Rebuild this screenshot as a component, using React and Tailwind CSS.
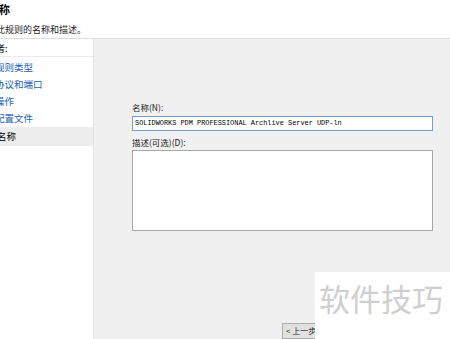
import React from 'react';

const cjk = { fontFamily: '"Noto Sans CJK SC", "Noto Sans", sans-serif' };

const steps = ['规则类型', '协议和端口', '操作', '配置文件'];

const App = () => {
  return (
    <div className="w-[450px] h-[339px] overflow-hidden bg-[#f0f0f0] flex flex-col relative" style={cjk}>
      {/* header */}
      <div className="h-[42px] bg-white border-b border-[#dcdcdc] flex flex-col pt-[2px]">
        <div className="text-[11px] font-bold leading-[14px] text-black ml-[-1px]">称</div>
        <div className="text-[9px] leading-[12px] mt-[8px] text-[#222] ml-[-4px]">此规则的名称和描述。</div>
      </div>

      <div className="flex flex-1">
        {/* left steps */}
        <div className="w-[94px] bg-white border-r border-[#e2e2e2] flex flex-col">
          <div className="h-[16px] border-b border-[#eaeaea] text-[9px] leading-[16px] text-black ml-[-4px] mt-[2px]">者:</div>
          <div className="flex flex-col mt-[2px]">
            {steps.map((s) => (
              <div key={s} className="h-[17px] text-[9.5px] leading-[17px] text-[#1a5fb4] ml-[-5px]">{s}</div>
            ))}
            <div className="h-[19px] bg-[#ededed] text-[9.5px] leading-[19px] text-black ml-[-5px] pl-[2px]">名称</div>
          </div>
        </div>

        {/* form */}
        <div className="flex-1 pl-[38px] pr-[17px] pt-[63px]">
          <div className="text-[8.5px] leading-[10px] text-[#222]">名称(N):</div>
          <div className="mt-[4px] h-[15px] bg-white border border-[#7a9cc6] flex items-center pl-[2px]">
            <span className="text-[6.9px] text-black whitespace-nowrap" style={{ fontFamily: '"Liberation Mono", monospace' }}>
              SOLIDWORKS PDM PROFESSIONAL Archlive Server UDP-ln
            </span>
          </div>
          <div className="mt-[6px] text-[8.5px] leading-[10px] text-[#222]">描述(可选)(D):</div>
          <div className="mt-[3px] h-[81px] bg-white border border-[#a8a8a8]"></div>
          <div className="mt-[92px] ml-[150px] w-[40px] h-[16px] bg-[#e1e1e1] border border-[#adadad] text-[8px] leading-[14px] pl-[3px] text-[#222]">
            &lt; 上一步
          </div>
        </div>
      </div>

      {/* watermark */}
      <div className="absolute left-[315px] top-[272px] w-[135px] h-[67px] bg-white flex items-start pt-[7px] pl-[4px]">
        <span className="text-[31px] leading-[38px] text-[#cfcfcf] tracking-[0px]">软件技巧</span>
      </div>
    </div>
  );
};

export default App;
